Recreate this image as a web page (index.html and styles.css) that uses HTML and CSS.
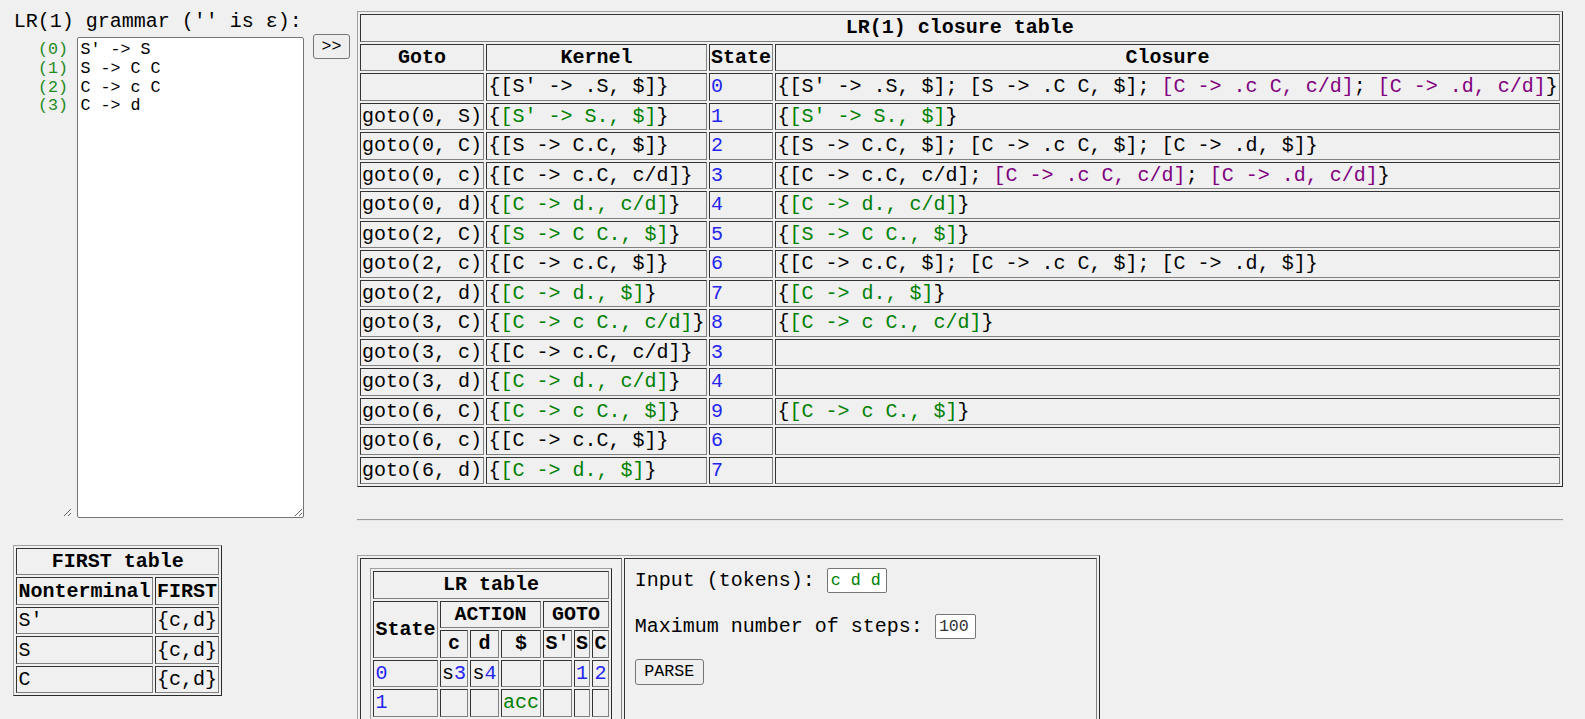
FILE: index.html
```html
<!DOCTYPE html>
<html>
<head>
<meta charset="utf-8">
<title>LR(1) parser</title>
<link rel="stylesheet" href="styles.css">
</head>
<body>
<div class="page">
  <div class="cell-grammar">
    <div class="gtitle">LR(1) grammar ('' is ε):</div>
    <div class="grow">
      <div class="linenos">(0)<br>(1)<br>(2)<br>(3)</div>
      <textarea class="grammar" spellcheck="false">S' -&gt; S
S -&gt; C C
C -&gt; c C
C -&gt; d</textarea>
      <button class="go">&gt;&gt;</button>
    </div>
  </div>
  <div class="cell-closure">
    <table class="t closure">
      <tr><th colspan="4">LR(1) closure table</th></tr>
      <tr><th>Goto</th><th>Kernel</th><th>State</th><th>Closure</th></tr>
      <tr><td></td><td>{[S' -&gt; .S, $]}</td><td class="st">0</td><td>{[S' -&gt; .S, $]; [S -&gt; .C C, $]; <span class="p">[C -&gt; .c C, c/d]</span>; <span class="p">[C -&gt; .d, c/d]</span>}</td></tr>
      <tr><td>goto(0, S)</td><td>{<span class="g">[S' -&gt; S., $]</span>}</td><td class="st">1</td><td>{<span class="g">[S' -&gt; S., $]</span>}</td></tr>
      <tr><td>goto(0, C)</td><td>{[S -&gt; C.C, $]}</td><td class="st">2</td><td>{[S -&gt; C.C, $]; [C -&gt; .c C, $]; [C -&gt; .d, $]}</td></tr>
      <tr><td>goto(0, c)</td><td>{[C -&gt; c.C, c/d]}</td><td class="st">3</td><td>{[C -&gt; c.C, c/d]; <span class="p">[C -&gt; .c C, c/d]</span>; <span class="p">[C -&gt; .d, c/d]</span>}</td></tr>
      <tr><td>goto(0, d)</td><td>{<span class="g">[C -&gt; d., c/d]</span>}</td><td class="st">4</td><td>{<span class="g">[C -&gt; d., c/d]</span>}</td></tr>
      <tr><td>goto(2, C)</td><td>{<span class="g">[S -&gt; C C., $]</span>}</td><td class="st">5</td><td>{<span class="g">[S -&gt; C C., $]</span>}</td></tr>
      <tr><td>goto(2, c)</td><td>{[C -&gt; c.C, $]}</td><td class="st">6</td><td>{[C -&gt; c.C, $]; [C -&gt; .c C, $]; [C -&gt; .d, $]}</td></tr>
      <tr><td>goto(2, d)</td><td>{<span class="g">[C -&gt; d., $]</span>}</td><td class="st">7</td><td>{<span class="g">[C -&gt; d., $]</span>}</td></tr>
      <tr><td>goto(3, C)</td><td>{<span class="g">[C -&gt; c C., c/d]</span>}</td><td class="st">8</td><td>{<span class="g">[C -&gt; c C., c/d]</span>}</td></tr>
      <tr><td>goto(3, c)</td><td>{[C -&gt; c.C, c/d]}</td><td class="st">3</td><td></td></tr>
      <tr><td>goto(3, d)</td><td>{<span class="g">[C -&gt; d., c/d]</span>}</td><td class="st">4</td><td></td></tr>
      <tr><td>goto(6, C)</td><td>{<span class="g">[C -&gt; c C., $]</span>}</td><td class="st">9</td><td>{<span class="g">[C -&gt; c C., $]</span>}</td></tr>
      <tr><td>goto(6, c)</td><td>{[C -&gt; c.C, $]}</td><td class="st">6</td><td></td></tr>
      <tr><td>goto(6, d)</td><td>{<span class="g">[C -&gt; d., $]</span>}</td><td class="st">7</td><td></td></tr>
    </table>
    <hr class="sep">
  </div>
  <div class="cell-first">
    <table class="t first">
      <tr><th colspan="2">FIRST table</th></tr>
      <tr><th>Nonterminal</th><th>FIRST</th></tr>
      <tr><td>S'</td><td>{c,d}</td></tr>
      <tr><td>S</td><td>{c,d}</td></tr>
      <tr><td>C</td><td>{c,d}</td></tr>
    </table>
  </div>
  <div class="cell-parse">
    <table class="t box">
      <tr>
        <td class="bc">
          <table class="t lr">
            <tr><th colspan="7">LR table</th></tr>
            <tr><th rowspan="2">State</th><th colspan="3">ACTION</th><th colspan="3">GOTO</th></tr>
            <tr><th>c</th><th>d</th><th>$</th><th>S'</th><th>S</th><th>C</th></tr>
            <tr><td class="st">0</td><td>s<span class="st">3</span></td><td>s<span class="st">4</span></td><td></td><td></td><td class="st">1</td><td class="st">2</td></tr>
            <tr><td class="st">1</td><td></td><td></td><td class="g">acc</td><td></td><td></td><td></td></tr>
            <tr><td class="st">2</td><td>s<span class="st">6</span></td><td>s<span class="st">7</span></td><td></td><td></td><td></td><td class="st">5</td></tr>
            <tr><td class="st">3</td><td>s<span class="st">3</span></td><td>s<span class="st">4</span></td><td></td><td></td><td></td><td class="st">8</td></tr>
            <tr><td class="st">4</td><td>r3</td><td>r3</td><td>r3</td><td></td><td></td><td></td></tr>
            <tr><td class="st">5</td><td></td><td></td><td>r1</td><td></td><td></td><td></td></tr>
            <tr><td class="st">6</td><td>s<span class="st">6</span></td><td>s<span class="st">7</span></td><td></td><td></td><td></td><td class="st">9</td></tr>
            <tr><td class="st">7</td><td></td><td></td><td>r3</td><td></td><td></td><td></td></tr>
            <tr><td class="st">8</td><td>r2</td><td>r2</td><td>r2</td><td></td><td></td><td></td></tr>
            <tr><td class="st">9</td><td></td><td></td><td>r2</td><td></td><td></td><td></td></tr>
          </table>
        </td>
        <td class="bc pcell">
          <div class="pform">
            <div class="prow"><span>Input (tokens):</span><input class="inp tok" value="c d d"></div>
            <div class="prow"><span>Maximum number of steps:</span><input class="inp steps" value="100"></div>
            <div class="prow"><button class="parse">PARSE</button></div>
          </div>
        </td>
      </tr>
    </table>
  </div>
</div>
</body>
</html>
```
FILE: styles.css
```css
html, body {
  overflow: hidden;
}
body {
  margin: 0;
  background: #f0f0f0;
  color: #000;
  font-family: "Liberation Mono", "DejaVu Sans Mono", monospace;
  font-size: 20px;
}
.page {
  display: grid;
  grid-template-columns: 343.4px max-content;
  align-items: start;
  padding: 11px 0 0 13.3px;
}
.gtitle {
  line-height: 22.66px;
  white-space: pre;
  padding-left: 0.5px;
}
.grow {
  display: flex;
  align-items: flex-start;
}
.linenos {
  box-sizing: border-box;
  width: 58.7px;
  height: 480px;
  margin-top: 3.6px;
  padding: 3.5px 4px 0 0;
  text-align: right;
  font-size: 16.67px;
  line-height: 18.9px;
  color: #1f8a1f;
  overflow: hidden;
  resize: vertical;
}
.grammar {
  box-sizing: border-box;
  width: 227px;
  height: 481px;
  margin: 3.6px 0 0 5px;
  padding: 2.5px;
  border: 1px solid #767676;
  border-radius: 2px;
  background: #fff;
  color: #000;
  font-family: "Liberation Mono", monospace;
  font-size: 16.67px;
  line-height: 18.9px;
  resize: both;
  outline: none;
}
.go {
  margin-left: 9px;
  height: 25px;
  padding: 0 7.5px;
  font-family: "Liberation Mono", monospace;
  font-size: 16.67px;
  background: #efefef;
  color: #000;
  border: 1px solid #767676;
  border-radius: 3px;
}
.t {
  border-collapse: separate;
  border-spacing: 2px;
  border: 1px solid;
  border-color: #a0a0a0 #2a2a2a #2a2a2a #a0a0a0;
}
.t td, .t th {
  border: 1px solid;
  border-color: #333 #808080 #808080 #333;
  padding: 1.25px;
  line-height: 23px;
  white-space: pre;
  text-align: left;
  vertical-align: middle;
  font-weight: normal;
}
.t th {
  font-weight: bold;
  text-align: center;
}
.st {
  color: #2424f0;
}
.g {
  color: #008000;
}
.p {
  color: #800080;
}
.sep {
  margin: 31.5px 0 0;
  height: 0;
  border: 0;
  border-top: 1px solid #9a9a9a;
  border-bottom: 1px solid #e6e6e6;
}
.cell-first {
  margin-top: 24.3px;
}
.cell-parse {
  margin-top: 34px;
}
.box > tbody > tr > td.bc {
  padding: 9.5px;
  vertical-align: top;
  white-space: normal;
  line-height: normal;
}
.box > tbody > tr > td.pcell {
  width: 452px;
}
.pform {
  display: flex;
  flex-direction: column;
  gap: 20.5px;
}
.prow {
  display: flex;
  align-items: center;
  gap: 12px;
  height: 25px;
  white-space: pre;
}
.inp {
  box-sizing: border-box;
  height: 25px;
  padding: 0 3px;
  border: 1px solid #767676;
  border-radius: 2px;
  background: #fff;
  font-family: "Liberation Mono", monospace;
  font-size: 16.67px;
  outline: none;
}
.tok {
  width: 60px;
  color: #008000;
}
.steps {
  width: 41px;
  color: #333;
}
.parse {
  box-sizing: border-box;
  height: 26px;
  width: 69px;
  padding: 0;
  font-family: "Liberation Mono", monospace;
  font-size: 16.67px;
  background: #efefef;
  color: #000;
  border: 1px solid #767676;
  border-radius: 3px;
}
```
